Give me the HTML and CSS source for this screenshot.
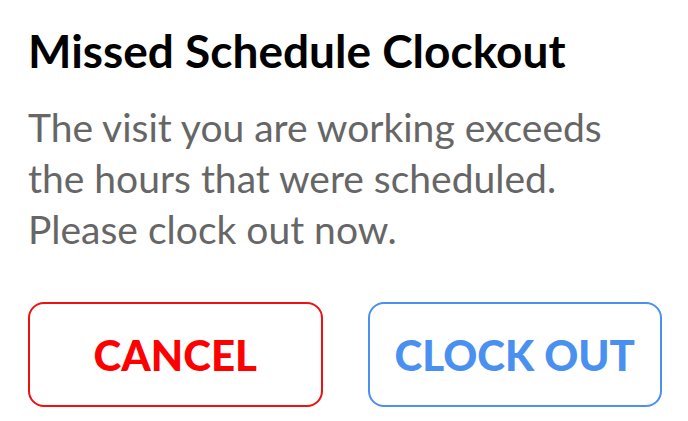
FILE: index.html
```html
<!DOCTYPE html>
<html lang="en">
<head>
    <meta charset="UTF-8">
    <meta name="viewport" content="width=device-width, initial-scale=1.0">
    <title>Missed Schedule Clockout</title>
    <link rel="stylesheet" href="styles.css">
</head>
<body>
    <div class="dialog">
        <h1 class="dialog-title">Missed Schedule Clockout</h1>
        <p class="dialog-message">The visit you are working exceeds the hours that were scheduled. Please clock out now.</p>

        <div class="dialog-actions">
            <button class="btn btn-cancel">CANCEL</button>
            <button class="btn btn-confirm">CLOCK OUT</button>
        </div>
    </div>
</body>
</html>
```

FILE: styles.css
```css
/* Reset */
* {
    margin: 0;
    padding: 0;
    box-sizing: border-box;
}

body {
    font-family: 'Lato', sans-serif;
    background-color: #fff;
    color: #000;
}

.dialog {
    width: 688px;
    padding: 24px 26px 0 28px;
}

.dialog-title {
    font-size: 46px;
    font-weight: 700;
    line-height: 54px;
    color: #000;
}

.dialog-message {
    margin-top: 24px;
    width: 620px;
    font-size: 39px;
    line-height: 51px;
    color: #666;
}

.dialog-actions {
    display: flex;
    gap: 45px;
    margin-top: 47px;
}

.btn {
    flex: 1;
    height: 105px;
    background: #fff;
    border-radius: 16px;
    border: 2px solid;
    font-family: 'Lato', sans-serif;
    font-size: 42px;
    font-weight: 900;
    cursor: pointer;
}

.btn-cancel {
    color: #ff0000;
    border-color: #ee1111;
}

.btn-confirm {
    color: #4a90f0;
    border-color: #4a90f0;
}
```
